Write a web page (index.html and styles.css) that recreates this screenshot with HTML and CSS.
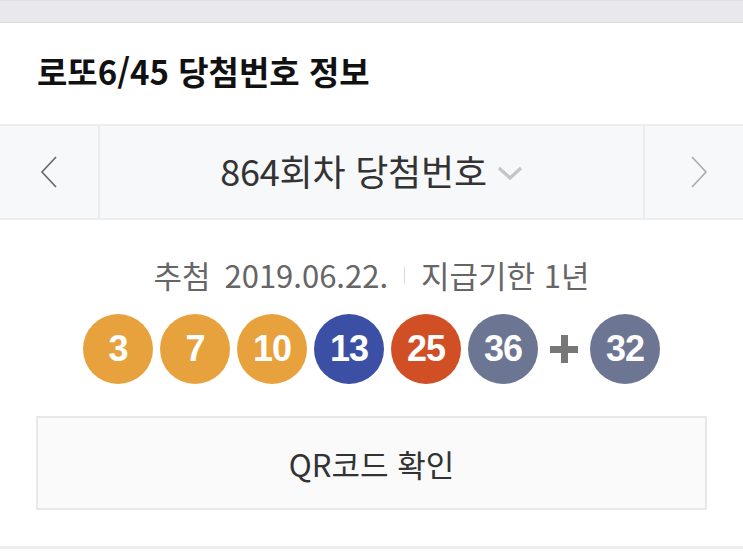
FILE: index.html
```html
<!DOCTYPE html>
<html lang="ko">
<head>
<meta charset="utf-8">
<link rel="stylesheet" href="styles.css">
</head>
<body>
<div class="topband"></div>
<header class="title-row">
  <h1 class="title">로또6/45 당첨번호 정보</h1>
</header>
<nav class="round-nav">
  <div class="nav-btn prev">
    <svg width="20" height="34" viewBox="0 0 20 34"><polyline points="16,2 2,17 16,32" fill="none" stroke="#666" stroke-width="1.6"/></svg>
  </div>
  <div class="nav-center">
    <span class="round-label">864회차 당첨번호</span>
    <svg class="caret" width="26" height="16" viewBox="0 0 26 16"><polyline points="2,3 13,13 24,3" fill="none" stroke="#c4c4c4" stroke-width="3.2"/></svg>
  </div>
  <div class="nav-btn next">
    <svg width="20" height="34" viewBox="0 0 20 34"><polyline points="3,2 17,17 3,32" fill="none" stroke="#aaa" stroke-width="1.6"/></svg>
  </div>
</nav>
<section class="result">
  <p class="info"><span class="draw">추첨</span><span class="date">2019.06.22.</span><span class="sep"></span><span class="limit">지급기한 1년</span></p>
  <div class="balls">
    <span class="ball y">3</span>
    <span class="ball y">7</span>
    <span class="ball y">10</span>
    <span class="ball b">13</span>
    <span class="ball r">25</span>
    <span class="ball g">36</span>
    <span class="plus"></span>
    <span class="ball g">32</span>
  </div>
  <button class="qr-btn">QR코드 확인</button>
</section>
<div class="bottom-line"></div>
</body>
</html>
```
FILE: styles.css
```css
* { box-sizing: border-box; }
html, body { margin: 0; padding: 0; background: #fff; }
body {
  width: 743px;
  font-family: "Noto Sans CJK KR", "Noto Sans", sans-serif;
  color: #333;
}
.topband {
  height: 23px;
  background: #e9e9ed;
  border-top: 1px solid #dedfe3;
  border-bottom: 1px solid #dcdde1;
}
.title-row {
  height: 101px;
  display: flex;
  align-items: center;
  padding-left: 37px;
}
.title {
  margin: 0 0 4px;
  font-size: 33px;
  font-weight: 700;
  color: #111;
  line-height: 1;
  letter-spacing: 0;
}
.round-nav {
  height: 96px;
  display: flex;
  background: #f7f8fa;
  border-top: 2px solid #ececef;
  border-bottom: 2px solid #ececef;
}
.nav-btn {
  width: 100px;
  display: flex;
  align-items: center;
}
.nav-btn.prev { padding-left: 40px; border-right: 2px solid #ececef; }
.nav-btn.next { padding-left: 44px; border-left: 2px solid #ececef; }
.nav-center {
  flex: 1;
  display: flex;
  align-items: center;
  justify-content: center;
  gap: 10px;
}
.round-label {
  font-size: 36px;
  line-height: 1;
  color: #333;
  letter-spacing: -0.2px;
  margin-bottom: 4px;
}
.caret { margin-top: 2px; }
.result {
  display: flex;
  flex-direction: column;
  align-items: center;
  padding: 36px 36px 0;
}
.info {
  margin: 0;
  display: flex;
  align-items: center;
  font-size: 31px;
  line-height: 38px;
  color: #666;
  letter-spacing: 0;
}
.date { margin-left: 14px; }
.sep {
  width: 1px;
  height: 17px;
  background: #d8d8d8;
  margin: 0 16px;
}
.balls {
  margin-top: 20px;
  display: flex;
  align-items: center;
  gap: 7px;
}
.ball {
  width: 70px;
  height: 70px;
  border-radius: 50%;
  display: flex;
  align-items: center;
  justify-content: center;
  font-family: "Liberation Sans", Arial, sans-serif;
  font-weight: 700;
  font-size: 36px;
  color: #fff;
  letter-spacing: -1px;
}
.ball.y { background: #e8a23d; }
.ball.b { background: #3b4fa5; }
.ball.r { background: #d04f25; }
.ball.g { background: #6c7592; }
.plus {
  width: 28px;
  height: 28px;
  margin: 0 5px;
  background:
    linear-gradient(#777, #777) center / 28px 7px no-repeat,
    linear-gradient(#777, #777) center / 7px 28px no-repeat;
}
.qr-btn {
  margin-top: 32px;
  width: 671px;
  height: 94px;
  background: #fafafa;
  border: 2px solid #e8e8e8;
  font-family: "Noto Sans CJK KR", "Noto Sans", sans-serif;
  font-size: 31px;
  color: #333;
  letter-spacing: 0;
  padding: 0;
}
.bottom-line {
  margin-top: 36px;
  height: 3px;
  background: #eeeeee;
}
```
